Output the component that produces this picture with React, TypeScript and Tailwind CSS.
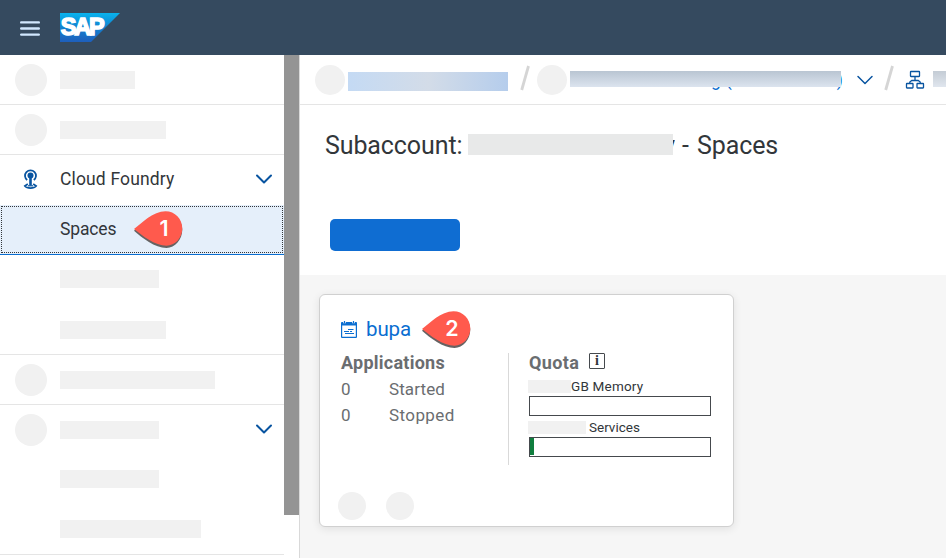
import type { ReactNode } from 'react';

function Chevron({ className, color, width }: { className: string; color: string; width: number }) {
  return (
    <svg className={className} width="18" height="12" viewBox="0 0 18 12" fill="none">
      <path d="M2 2.5 L9 9.5 L16 2.5" stroke={color} strokeWidth={width} strokeLinecap="round" strokeLinejoin="round" />
    </svg>
  );
}

function SapLogo() {
  return (
    <svg className="ml-5 mt-[13px]" width="60" height="29" viewBox="0 0 60 29">
      <defs>
        <linearGradient id="sap" x1="0" y1="0" x2="0" y2="1">
          <stop offset="0" stopColor="#08b4ee" />
          <stop offset="0.45" stopColor="#1286d2" />
          <stop offset="1" stopColor="#1e5fbc" />
        </linearGradient>
      </defs>
      <path d="M0 0H60L31 29H0Z" fill="url(#sap)" />
      <text x="0.800" y="22.300" letterSpacing="-2.200" fontFamily="Liberation Sans, sans-serif" fontWeight="700" fontSize="23.500" fill="#fff" stroke="#fff" strokeWidth="1.500">SAP</text>
    </svg>
  );
}

function Pin({ label, className }: { label: string; className: string }) {
  return (
    <svg className={className} width="52" height="42" viewBox="0 0 52 42">
      <path d="M1 20.800C9 14 20 3 32.500 3C42 3 49.300 10.200 49.300 19.800C49.300 29.500 42 37.800 33.500 38C22 38 9 28 1 20.800Z" fill="#666262" />
      <path d="M1 19C9 13 20 1.300 32.500 1.300C42 1.300 49.300 9 49.300 18.500C49.300 28 42 35.700 33.500 35.700C22 35.700 9 25.500 1 19Z" fill="#ff5a4d" />
      <text x="31" y="26" textAnchor="middle" fontFamily="Inter, Liberation Sans, sans-serif" fontWeight="600" fontSize="21.500" fill="#fff">{label}</text>
    </svg>
  );
}

function FoundryIcon() {
  return (
    <svg className="mt-[13px] ml-[23px]" width="15" height="22" viewBox="0 0 15 22" fill="none" stroke="#0854a0">
      <path d="M4.200 12A5.500 5.300 0 1 1 10.800 12" strokeWidth="1.800" />
      <circle cx="7.500" cy="7.500" r="3" fill="#0854a0" stroke="none" />
      <path d="M7.500 9V17.500" strokeWidth="2.600" />
      <path d="M4.800 16L1.800 18C4 20.800 11 20.800 13.200 18L10.200 16" strokeWidth="1.600" />
      <path d="M5 17.800H10" strokeWidth="1.200" />
    </svg>
  );
}

function Row({ children, line = false }: { children?: ReactNode; line?: boolean }) {
  return (
    <div className={`flex h-[50px] w-[284px] shrink-0 items-start border-b ${line ? 'border-[#e5e5e5]' : 'border-transparent'}`}>
      {children}
    </div>
  );
}

function Dot() {
  return <div className="ml-[15px] mt-[9px] size-8 rounded-full bg-[#f1f1f1]" />;
}

function Sidebar() {
  return (
    <aside className="flex w-[300px] shrink-0 border-r border-[#d9d9d9] bg-white">
      <nav className="flex w-[284px] flex-col text-[17.5px] leading-[24px] text-[#32363a]">
        <Row line><Dot /><div className="ml-[13px] mt-4 h-[18px] w-[75px] bg-[#f1f1f1]" /></Row>
        <Row line><Dot /><div className="ml-[13px] mt-4 h-[18px] w-[106px] bg-[#f1f1f1]" /></Row>
        <Row>
          <FoundryIcon />
          <span className="ml-[22px] mt-3 w-[194px] tracking-[0.15px]">Cloud Foundry</span>
          <Chevron className="ml-[1px] mt-[18px] shrink-0" color="#0854a0" width={2} />
        </Row>
        <div className="flex h-[50px] shrink-0 border-b border-[#0a6ed1] bg-[#e5effa]">
          <div className="m-px mb-px flex flex-1 border border-dotted border-[#32363a]">
            <span className="ml-[58px] mt-[10px] w-[56px] tracking-[-0.15px]">Spaces</span>
            <Pin label="1" className="ml-[17px] mt-[3px]" />
          </div>
        </div>
        <Row><div className="ml-[60px] mt-[15px] h-[18px] w-[99px] bg-[#f1f1f1]" /></Row>
        <Row line><div className="ml-[60px] mt-4 h-[18px] w-[106px] bg-[#f1f1f1]" /></Row>
        <Row line><Dot /><div className="ml-[13px] mt-4 h-[18px] w-[155px] bg-[#f1f1f1]" /></Row>
        <Row>
          <Dot /><div className="ml-[13px] mt-4 h-[18px] w-[99px] bg-[#f1f1f1]" />
          <Chevron className="ml-[96px] mt-[18px]" color="#0854a0" width={2} />
        </Row>
        <Row><div className="ml-[60px] mt-[15px] h-[18px] w-[99px] bg-[#f1f1f1]" /></Row>
        <Row line><div className="ml-[60px] mt-[15px] h-[18px] w-[141px] bg-[#f1f1f1]" /></Row>
      </nav>
      <div className="h-[460px] w-[15px] bg-[#949494]" />
    </aside>
  );
}

function Slash() {
  return (
    <svg width="10" height="26" viewBox="0 0 10 26" className="mt-[10px] shrink-0">
      <path d="M8.500 1L1.700 25" stroke="#d5d5d5" strokeWidth="2.800" />
    </svg>
  );
}

function Breadcrumb() {
  return (
    <div className="flex h-[50px] shrink-0 items-start overflow-hidden border-b border-[#e5e5e5]">
      <div className="ml-[15px] mt-[10px] size-[30px] shrink-0 rounded-full bg-[#f1f1f1]" />
      <div className="ml-[3px] mt-[17px] h-[19px] w-[160px] shrink-0 bg-linear-to-r from-[#c4daf4] via-[#d3dce8] to-[#b5cdec]" />
      <div className="ml-[12px] flex shrink-0"><Slash /></div>
      <div className="ml-[7px] mt-[10px] size-[30px] shrink-0 rounded-full bg-[#f1f1f1]" />
      <div className="relative ml-[3px] mt-4 h-6 w-[274px] shrink-0 text-[17.5px] leading-[20px] text-[#0a6ed1]">
        <div className="flex pl-[141px] -mt-px">
          <span>g</span>
          <span className="ml-[5px]">(</span>
          <span className="ml-[105px]">)</span>
        </div>
        <div className="absolute left-0 top-0 h-4 w-[271px] bg-linear-to-b from-[#b9c5d2] to-[#dce4ef]" />
      </div>
      <Chevron className="ml-[12px] mt-[19px] shrink-0" color="#0854a0" width={1.5} />
      <div className="ml-[10px] flex shrink-0"><Slash /></div>
      <svg className="ml-[11px] mt-[15px] shrink-0" width="20" height="20" viewBox="0 0 20 20" fill="none" stroke="#0854a0" strokeWidth="1.300">
        <rect x="5.500" y="1.500" width="9" height="5" rx="0.500" />
        <rect x="1.500" y="13.500" width="6.500" height="4.500" rx="0.500" />
        <rect x="12" y="13.500" width="6.500" height="4.500" rx="0.500" />
        <path d="M10 6.500V10.500M4.800 13.500V12L6.800 10.500H13.200L15.200 12V13.500" />
      </svg>
      <div className="ml-[8px] mt-4 h-4 w-[14px] shrink-0 bg-linear-to-b from-[#c4ccd5] to-[#e0e6ee]" />
    </div>
  );
}

function SpaceCard() {
  return (
    <div className="ml-[19px] mt-[19px] flex h-[233px] w-[415px] flex-col rounded-[6px] border border-[#d0d0d0] bg-white shadow-[0_2px_8px_rgba(0,0,0,0.09)]">
      <div className="flex h-[58px] items-start">
        <svg className="ml-[20px] mt-[25px]" width="18" height="19" viewBox="0 0 18 19" fill="none" stroke="#0a6ed1" strokeWidth="1.200">
          <rect x="1.600" y="2.600" width="14.800" height="14.800" rx="0.500" />
          <path d="M1.600 4H16.400" strokeWidth="3" />
          <path d="M4.500 1V3.200M13.500 1V3.200" stroke="#fff" strokeWidth="2.600" />
          <path d="M4.500 1V3.200M13.500 1V3.200" strokeWidth="1.200" />
          <path d="M8 9.500H13.500M4 11.500H9M10 11.500H12M5 13.500H14" strokeWidth="1" />
        </svg>
        <span className="ml-[8px] mt-[21px] w-[46px] text-[20.5px] leading-[26px] tracking-[-0.1px] text-[#0a6ed1]">bupa</span>
        <Pin label="2" className="ml-[9px] mt-[15px]" />
      </div>
      <div className="flex h-[112px] text-[17px] text-[#6a6d70]">
        <div className="w-[189px] border-r border-[#d9d9d9] pl-[21px]">
          <div className="-mt-[2px] text-[18px] font-bold leading-[24px] tracking-[0.25px]">Applications</div>
          <div className="mt-[1px] flex leading-[26px]"><span className="w-[48px]">0</span><span className="tracking-[0.1px]">Started</span></div>
          <div className="flex leading-[26px]"><span className="w-[48px]">0</span><span className="tracking-[0.4px]">Stopped</span></div>
        </div>
        <div className="flex-1 pl-[20px] text-[13.5px] text-[#32363a]">
          <div className="flex h-[27px] items-start">
            <span className="-mt-[2px] w-[51px] text-[18px] font-bold leading-[24px] tracking-[0.4px] text-[#6a6d70]">Quota</span>
            <div className="ml-[9px] flex size-4 items-center justify-center rounded-[1px] border border-[#45494d] font-['Liberation_Serif',serif] text-[14px] font-bold leading-none">i</div>
          </div>
          <div className="-ml-px flex h-[16px] items-start">
            <div className="h-[13px] w-[43px] bg-[#f1f1f1]" />
            <span className="-mt-[2px] leading-[16px] tracking-[0.2px]">GB Memory</span>
          </div>
          <div className="h-5 w-[182px] border border-[#45494d]" />
          <div className="-ml-px mt-[5px] flex h-[16px] items-start">
            <div className="h-[13px] w-[58px] bg-[#f1f1f1]" />
            <span className="ml-[3px] -mt-[2px] leading-[16px]">Services</span>
          </div>
          <div className="flex h-5 w-[182px] border border-[#45494d] pb-px">
            <div className="w-1 bg-[#107e3e]" />
          </div>
        </div>
      </div>
      <div className="mt-[27px] flex gap-5 pl-[18px]">
        <div className="size-7 rounded-full bg-[#f1f1f1]" />
        <div className="size-7 rounded-full bg-[#f1f1f1]" />
      </div>
    </div>
  );
}

export default function App() {
  return (
    <div className="flex h-[558px] w-[946px] flex-col overflow-hidden bg-white font-[Roboto,sans-serif]">
      <header className="flex h-[55px] shrink-0 items-start bg-[#354a5f]">
        <svg className="ml-5 mt-5" width="20" height="17" viewBox="0 0 20 17" stroke="#d1e8ff" strokeWidth="2.400" strokeLinecap="round">
          <path d="M1.200 2.400H18.800M1.200 8.500H18.800M1.200 14.600H18.800" />
        </svg>
        <SapLogo />
      </header>
      <div className="flex min-h-0 flex-1">
        <Sidebar />
        <main className="flex min-w-0 flex-1 flex-col">
          <Breadcrumb />
          <div className="flex h-[170px] shrink-0 flex-col">
            <h1 className="flex h-[114px] items-start pl-[25px] text-[25px] leading-[30px] text-[#32363a]">
              <span className="mt-[26px] w-[143px] tracking-[-0.1px]">Subaccount:</span>
              <span className="relative mt-[26px] h-[30px] w-[207px] overflow-hidden text-right">
                y
                <span className="absolute left-0 top-[3px] h-[21px] w-[205px] bg-[#e8e9e9]" />
                <span className="absolute bottom-0 left-0 h-[6px] w-full bg-white" />
              </span>
              <span className="ml-[7px] mt-[26px] whitespace-nowrap">-<span className="ml-[2px] tracking-[-0.1px]"> Spaces</span></span>
            </h1>
            <button className="ml-[30px] h-8 w-[130px] rounded-[5px] bg-[#0f6dd2]" />
          </div>
          <section className="min-h-0 flex-1 bg-[#f6f6f6]">
            <SpaceCard />
          </section>
        </main>
      </div>
    </div>
  );
}
